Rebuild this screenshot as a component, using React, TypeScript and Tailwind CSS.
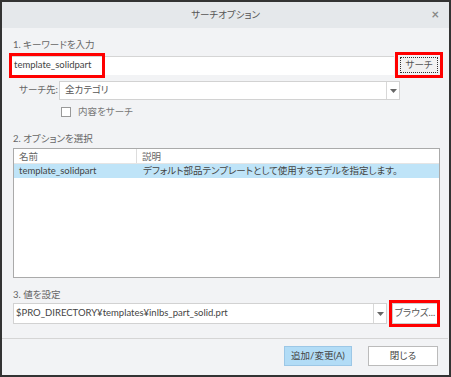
import React from 'react';

const font = {
  fontFamily: 'Lato, "Noto Sans CJK JP", sans-serif',
  fontFeatureSettings: '"palt"',
};

function Arrow() {
  return (
    <svg width="7" height="4" viewBox="0 0 7 4">
      <path d="M0 0 L7 0 L3.5 4 Z" fill="#666" />
    </svg>
  );
}

export default function App() {
  return (
    <div
      className="w-[451px] h-[377px] border-2 border-[#333] bg-[#f2f3f5] flex flex-col text-[9.5px] text-[#444] overflow-hidden whitespace-nowrap"
      style={font}
    >
      <div className="h-[26px] bg-[#e5e8eb] flex items-center relative shrink-0">
        <div className="flex-1 text-center text-[#555]">サーチオプション</div>
        <span className="absolute right-[10px] top-[6px] text-[13px] font-bold text-[#888] leading-none">×</span>
      </div>

      <div className="flex-1 flex flex-col pl-[8px] pr-[9px]">
        <div className="mt-[10px] ml-[3px] text-[#666] leading-[14px]">1. キーワードを入力</div>
        <div className="flex items-center mt-[3px] h-[20px]">
          <div className="relative flex-1 h-[19px] bg-white border-t border-[#d5d5d5] flex items-center">
            <div className="absolute left-[-1px] top-[-4px] w-[96px] h-[25px] border-[3px] border-[#f00]" />
            <span className="pl-[4px] text-[#444]">template_solidpart</span>
          </div>
          <div className="relative ml-[4px] w-[42px] h-[20px] flex items-center justify-center">
            <div className="absolute -inset-[3px] border-[3px] border-[#f00]" />
            <div className="w-[38px] h-[16px] bg-[#f2f2f2] border border-dotted border-[#333] flex items-center justify-center text-[#555]">
              サーチ
            </div>
          </div>
        </div>

        <div className="flex items-center mt-[6px] h-[19px]">
          <span className="w-[49px] pl-[9px] text-[#666]">サーチ先:</span>
          <div className="w-[341px] h-[19px] bg-white border border-[#d2d2d2] flex items-center">
            <span className="flex-1 pl-[5px] text-[#555]">全カテゴリ</span>
            <div className="w-[13px] h-full border-l border-[#d8d8d8] flex items-center justify-center">
              <Arrow />
            </div>
          </div>
        </div>

        <div className="flex items-center mt-[4px] ml-[51px] gap-[7px] h-[16px]">
          <div className="w-[10px] h-[10px] bg-white border border-[#999]" />
          <span className="text-[#777]">内容をサーチ</span>
        </div>

        <div className="mt-[12px] ml-[3px] text-[#666] leading-[14px]">2. オプションを選択</div>
        <div className="mt-[2px] ml-[3px] h-[130px] w-[427px] bg-white border border-[#aaa] flex flex-col">
          <div className="flex h-[15px] border-b border-[#e5e5e5] text-[#666]">
            <div className="w-[123px] pl-[5px] border-r border-[#ddd] leading-[15px]">名前</div>
            <div className="pl-[5px] leading-[15px]">説明</div>
          </div>
          <div className="flex h-[14px] bg-[#bfe4f8] text-[#444] leading-[14px]">
            <div className="w-[123px] pl-[5px]">template_solidpart</div>
            <div className="pl-[6px]">デフォルト部品テンプレートとして使用するモデルを指定します。</div>
          </div>
        </div>

        <div className="mt-[10px] ml-[3px] text-[#666] leading-[14px]">3. 値を設定</div>
        <div className="flex items-center mt-[1px] ml-[3px] h-[21px]">
          <div className="w-[374px] h-[21px] bg-white border border-[#d2d2d2] flex items-center">
            <span className="flex-1 pl-[2px] text-[#444]">$PRO_DIRECTORY¥templates¥inlbs_part_solid.prt</span>
            <div className="w-[13px] h-full border-l border-[#d8d8d8] flex items-center justify-center">
              <Arrow />
            </div>
          </div>
          <div className="relative ml-[5px] w-[46px] h-[21px]">
            <div className="absolute left-[-3px] top-[-3px] right-[-2px] bottom-[-3px] border-[3px] border-[#f00]" />
            <div className="w-full h-full bg-white border border-[#ccc] flex items-center justify-center text-[#555]">
              ブラウズ...
            </div>
          </div>
        </div>

        <div className="mt-[14px] -mx-[8px] border-t border-[#d5d5d5]" />

        <div className="flex justify-end gap-[16px] mt-[7px] pr-[2px]">
          <div className="w-[68px] h-[20px] bg-[#b2dcf6] border border-[#9cc7e6] flex items-center justify-center text-[#444]">
            追加/変更(A)
          </div>
          <div className="w-[70px] h-[20px] bg-white border border-[#bbb] flex items-center justify-center text-[#444]">
            閉じる
          </div>
        </div>
      </div>
    </div>
  );
}
